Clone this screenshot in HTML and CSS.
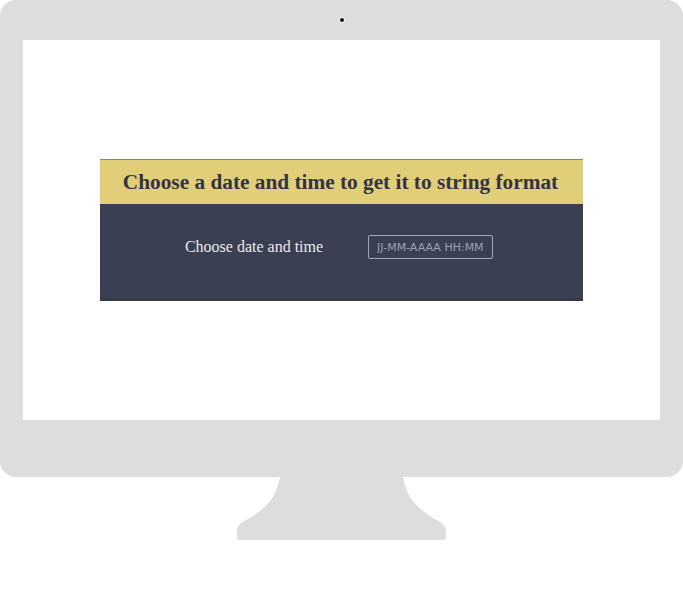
FILE: index.html
```html
<!DOCTYPE html>
<html>
<head>
<meta charset="utf-8">
<link rel="stylesheet" href="styles.css">
</head>
<body>
<div class="device">
  <div class="frame">
    <div class="bezel-top"><span class="camera"></span></div>
    <div class="screen">
      <div class="card">
        <h1 class="card-title">Choose a date and time to get it to string format</h1>
        <div class="card-body">
          <label class="field-label" for="dt">Choose date and time</label>
          <input class="field-input" id="dt" type="text" placeholder="JJ-MM-AAAA HH:MM">
        </div>
      </div>
    </div>
    <div class="bezel-bottom"></div>
  </div>
  <svg class="stand" width="683" height="64" viewBox="0 0 683 64">
    <path d="M280 0 C 276 22, 266 32, 243 45 Q237 49 237 53 L237 60 Q237 63 240 63 L443 63 Q446 63 446 60 L446 53 Q446 49 440 45 C417 32, 407 22, 403 0 Z" fill="#dddddd"/>
  </svg>
</div>
</body>
</html>
```
FILE: styles.css
```css
html, body {
  margin: 0;
  padding: 0;
  background: #ffffff;
}
.device {
  width: 683px;
  display: flex;
  flex-direction: column;
}
.frame {
  width: 683px;
  height: 477px;
  background: #dddddd;
  border-radius: 16px;
  display: flex;
  flex-direction: column;
  align-items: center;
}
.bezel-top {
  height: 40px;
  width: 100%;
  display: flex;
  align-items: center;
  justify-content: center;
}
.camera {
  width: 4px;
  height: 4px;
  border-radius: 50%;
  background: #10131f;
  box-shadow: 0 0 0 1px #eeeeee;
  margin-left: 1px;
}
.screen {
  width: 637px;
  height: 380px;
  background: #ffffff;
  display: flex;
  flex-direction: column;
  align-items: center;
  padding-top: 119px;
  box-sizing: border-box;
}
.bezel-bottom {
  height: 57px;
}
.card {
  width: 483px;
  display: flex;
  flex-direction: column;
}
.card-title {
  margin: 0;
  height: 45px;
  box-sizing: border-box;
  border-top: 1px solid #8a8472;
  background: #e1ce79;
  color: #323445;
  font-family: "Liberation Serif", serif;
  font-weight: bold;
  font-size: 21.3px;
  display: flex;
  align-items: center;
  justify-content: center;
  padding-right: 2px;
}
.card-body {
  height: 97px;
  box-sizing: border-box;
  background: #3a3f51;
  border-bottom: 3px solid #363b4b;
  display: flex;
  align-items: flex-start;
  justify-content: center;
  padding-top: 31px;
  padding-right: 5px;
  gap: 45px;
}
.field-label {
  font-family: "Liberation Serif", serif;
  font-size: 16px;
  color: #e9eaf2;
  line-height: 24px;
}
.field-input {
  width: 125px;
  height: 24px;
  box-sizing: border-box;
  background: transparent;
  border: 1px solid #a3a7bb;
  border-radius: 2px;
  padding: 0 8px;
  font-family: "DejaVu Sans", sans-serif;
  font-size: 11px;
  color: #dde;
  outline: none;
}
.field-input::placeholder {
  color: #9ca1b8;
}
.stand {
  display: block;
}
```
